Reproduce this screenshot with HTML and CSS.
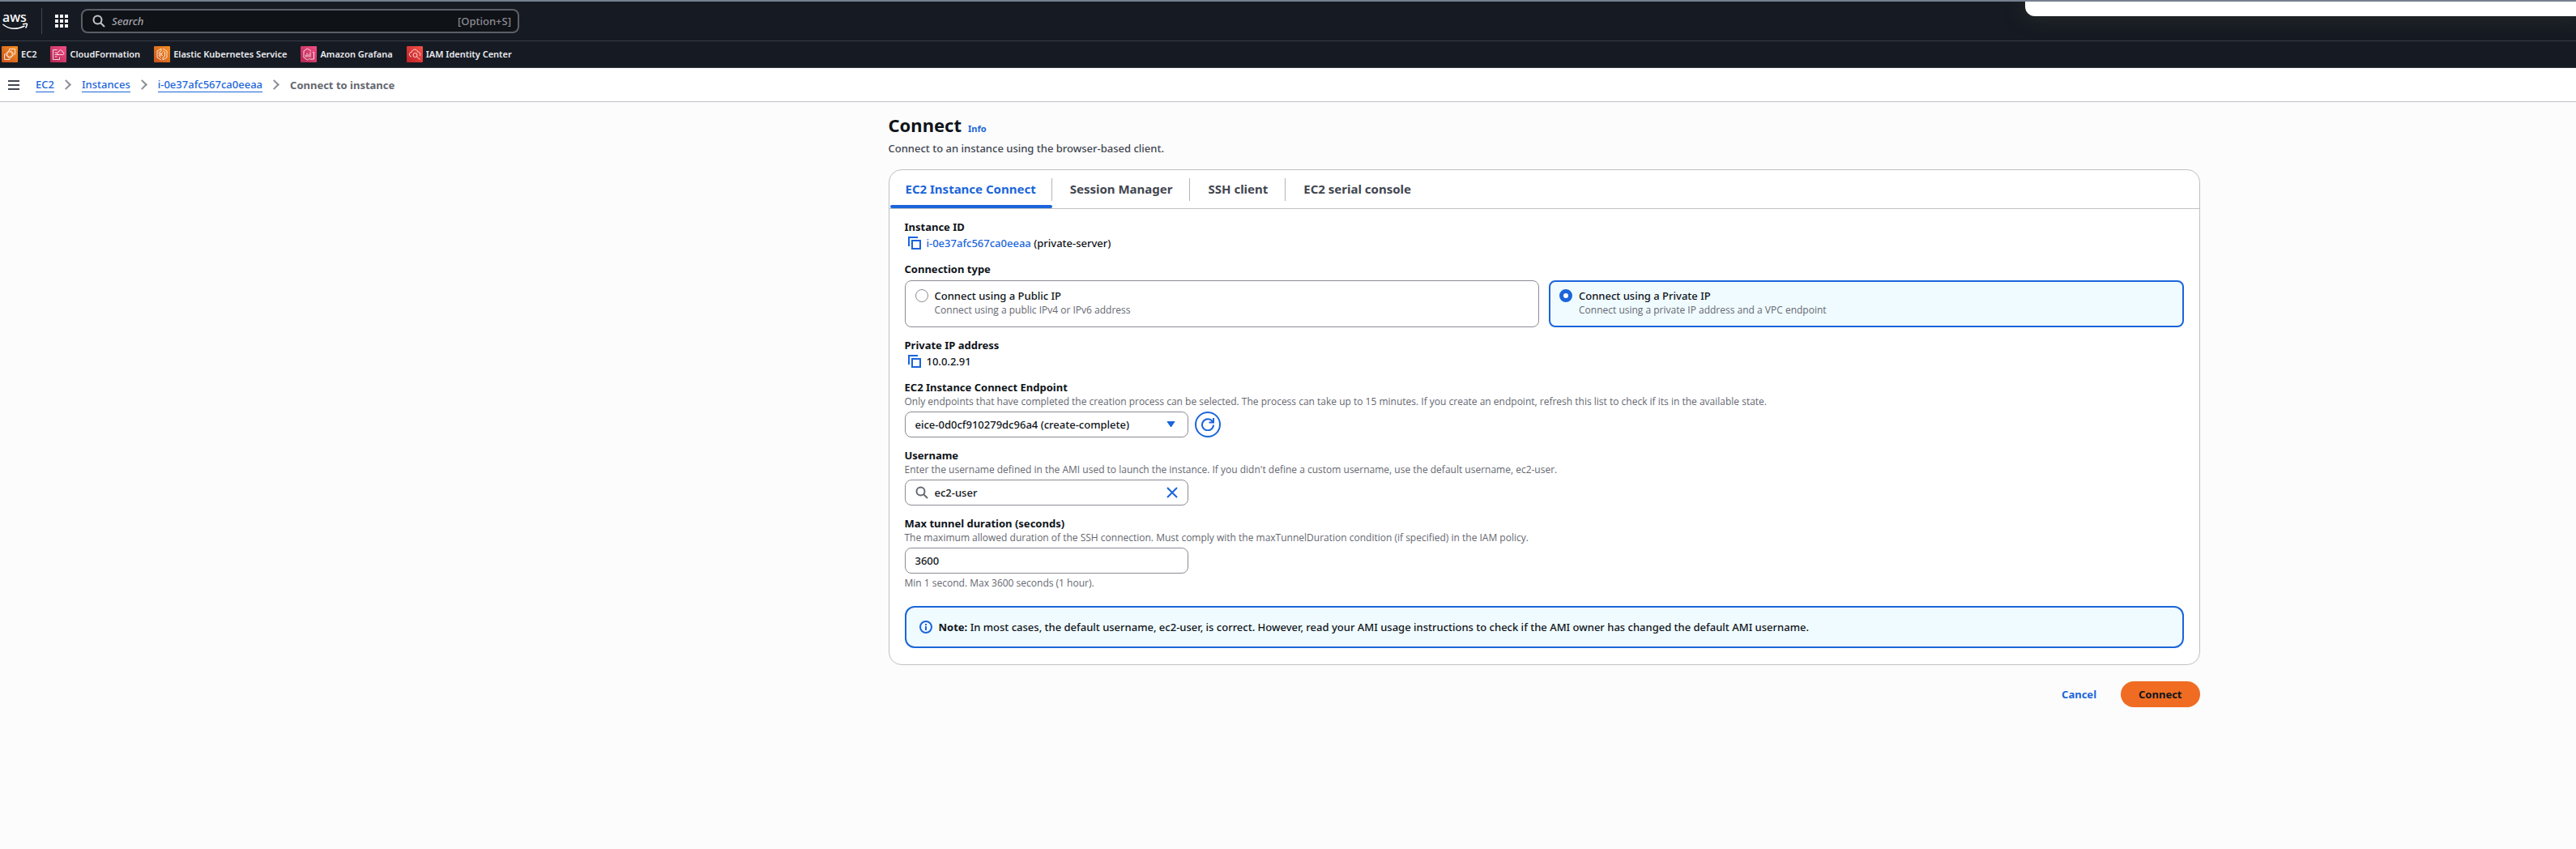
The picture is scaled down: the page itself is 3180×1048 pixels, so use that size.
FILE: index.html
```html
<!DOCTYPE html>
<html lang="en">

<head>
  <meta charset="UTF-8">
  <meta name="viewport" content="width=device-width, initial-scale=1.0">
  <title>Connect to instance | EC2</title>
  <link rel="stylesheet" href="styles.css">
</head>

<body>
  <header class="console-header">
    <div class="top-bar">
      <a class="aws-logo" href="#" aria-label="AWS home">
        <svg width="32" height="32" viewBox="0 0 32 32">
          <text x="0" y="17" font-size="16" fill="#fff">aws</text>
          <path d="M0.500 20c8 6.500 18 6.500 27 2M25 20c3-1 6-1 5.500 0s-.5 3-2 4.500" fill="none" stroke="#fff" stroke-width="1.500" />
        </svg>
      </a>
      <span class="divider"></span>
      <button class="icon-button services" aria-label="Services">
        <svg width="16" height="16" viewBox="0 0 16 16" fill="#fff">
          <path d="M0 0h4v4H0zM6 0h4v4H6zM12 0h4v4h-4zM0 6h4v4H0zM6 6h4v4H6zM12 6h4v4h-4zM0 12h4v4H0zM6 12h4v4H6zM12 12h4v4h-4z" />
        </svg>
      </button>
      <div class="global-search">
        <svg width="16" height="16" viewBox="0 0 16 16" fill="none" stroke="#c6c6cd" stroke-width="2">
          <circle cx="6.500" cy="6.500" r="5" />
          <path d="M10 10l5 5" />
        </svg>
        <input type="search" placeholder="Search" aria-label="Search">
        <span class="shortcut">[Option+S]</span>
      </div>
    </div>

    <nav class="favorites" aria-label="Favorites">
      <a href="#">
        <svg width="20" height="20" viewBox="0 0 20 20">
          <defs>
            <linearGradient id="orange" x1="0" y1="1" x2="1" y2="0">
              <stop stop-color="#c8511b" />
              <stop offset="1" stop-color="#f79022" />
            </linearGradient>
            <linearGradient id="pink" x1="0" y1="1" x2="1" y2="0">
              <stop stop-color="#b0264f" />
              <stop offset="1" stop-color="#f34f86" />
            </linearGradient>
            <linearGradient id="red" x1="0" y1="1" x2="1" y2="0">
              <stop stop-color="#bd1f27" />
              <stop offset="1" stop-color="#f85348" />
            </linearGradient>
          </defs>
          <rect width="20" height="20" rx="1" fill="url(#orange)" />
          <path d="M9.500 6V3.500h7V10h-2.500M6 10H3.500v6.500H10V14M7 7h6v6H7zM8.500 7V5.500M11.500 7V5.500M8.500 13v1.500M11.500 13v1.500M7 8.500H5.500M7 11.500H5.500M13 8.500h1.500M13 11.500h1.500" fill="none" stroke="#fff" stroke-width=".8" />
        </svg>
        EC2
      </a>
      <a href="#">
        <svg width="20" height="20" viewBox="0 0 20 20">
          <rect width="20" height="20" rx="1" fill="url(#pink)" />
          <path d="M8.500 4.500h-5v12h8v-3M5.500 8h3M5.500 10.500h4M5.500 13h3M9 10.500c-1-3 1-3.500 1.500-3.500.5-3 4-3 4.500 0 2 0 2.500 3.500.5 3.500z" fill="none" stroke="#fff" stroke-width=".8" />
        </svg>
        CloudFormation
      </a>
      <a href="#">
        <svg width="20" height="20" viewBox="0 0 20 20">
          <rect width="20" height="20" rx="1" fill="url(#orange)" />
          <path d="M9 3L4 6v8l5 3M11 3l5 3v8l-5 3M9 6L6.500 7.500v5L9 14M11 6l2.500 1.500v5L11 14M9 3v3M11 14v3M8.500 8v4M8.500 10l2.500-2M8.500 10l2.500 2" fill="none" stroke="#fff" stroke-width=".8" />
        </svg>
        Elastic Kubernetes Service
      </a>
      <a href="#">
        <svg width="20" height="20" viewBox="0 0 20 20">
          <rect width="20" height="20" rx="1" fill="url(#pink)" />
          <path d="M13 6L8.500 3 4 6v8l4.500 3 2-1.500M11 16h5.500V7.500H15M8 8.500v5M10 10v3.500M12 7.500v6M6.500 11v2.500" fill="none" stroke="#fff" stroke-width=".8" />
        </svg>
        Amazon Grafana
      </a>
      <a href="#">
        <svg width="20" height="20" viewBox="0 0 20 20">
          <rect width="20" height="20" rx="1" fill="url(#red)" />
          <path d="M6 13c-4-1-3-5.500 0-5.500C7 3 13 3 13.500 7c3.500 0 4 4 2.500 5M12.500 13l4 3.500" fill="none" stroke="#fff" stroke-width=".8" />
          <circle cx="10.500" cy="11" r="2.500" fill="none" stroke="#fff" stroke-width=".8" />
        </svg>
        IAM Identity Center
      </a>
    </nav>
    <div class="notice-panel"></div>
  </header>

  <div class="breadcrumb-bar">
    <button class="icon-button" aria-label="Open navigation">
      <svg width="14" height="12" viewBox="0 0 14 12" stroke="#424650" stroke-width="2">
        <path d="M0 1h14M0 6h14M0 11h14" />
      </svg>
    </button>
    <nav aria-label="Breadcrumbs">
      <ol class="breadcrumbs">
        <li><a href="#">EC2</a></li>
        <li><a href="#">Instances</a></li>
        <li><a href="#">i-0e37afc567ca0eeaa</a></li>
        <li>Connect to instance</li>
      </ol>
    </nav>
  </div>

  <main class="page">
    <form class="content">
      <div class="page-header">
        <h1>Connect</h1>
        <a class="info-link" href="#">Info</a>
      </div>
      <p class="page-description">Connect to an instance using the browser-based client.</p>

      <section class="card">
        <div class="tabs" role="tablist">
          <button type="button" role="tab" class="tab active" aria-selected="true">EC2 Instance Connect</button>
          <button type="button" role="tab" class="tab">Session Manager</button>
          <button type="button" role="tab" class="tab">SSH client</button>
          <button type="button" role="tab" class="tab">EC2 serial console</button>
        </div>

        <div class="card-body">
          <div class="field">
            <h2 class="label">Instance ID</h2>
            <div class="copy-row">
              <button type="button" class="icon-button" aria-label="Copy instance ID">
                <svg width="16" height="16" viewBox="0 0 16 16" fill="none" stroke="#1b65da" stroke-width="2">
                  <path d="M5 5h10v10H5zM1 12V1h11" />
                </svg>
              </button>
              <span><a href="#">i-0e37afc567ca0eeaa</a> (private-server)</span>
            </div>
          </div>

          <fieldset class="field">
            <legend class="label">Connection type</legend>
            <div class="tiles">
              <label class="tile">
                <input type="radio" name="connection">
                <span class="tile-text">
                  <span>Connect using a Public IP</span>
                  <span class="hint">Connect using a public IPv4 or IPv6 address</span>
                </span>
              </label>
              <label class="tile selected">
                <input type="radio" name="connection" checked>
                <span class="tile-text">
                  <span>Connect using a Private IP</span>
                  <span class="hint">Connect using a private IP address and a VPC endpoint</span>
                </span>
              </label>
            </div>
          </fieldset>

          <div class="field">
            <h2 class="label">Private IP address</h2>
            <div class="copy-row">
              <button type="button" class="icon-button" aria-label="Copy private IP address">
                <svg width="16" height="16" viewBox="0 0 16 16" fill="none" stroke="#1b65da" stroke-width="2">
                  <path d="M5 5h10v10H5zM1 12V1h11" />
                </svg>
              </button>
              <span>10.0.2.91</span>
            </div>
          </div>

          <div class="field">
            <label class="label" for="endpoint">EC2 Instance Connect Endpoint</label>
            <p class="hint">Only endpoints that have completed the creation process can be selected. The process can take up to 15 minutes. If you create an endpoint, refresh this list to check if its in the available state.</p>
            <div class="control-row">
              <div class="control">
                <select id="endpoint">
                  <option>eice-0d0cf910279dc96a4 (create-complete)</option>
                </select>
                <svg width="16" height="8" viewBox="0 0 16 8">
                  <path d="M3 .5h9L7.500 7z" fill="#1b65da" stroke="#1b65da" stroke-linejoin="round" />
                </svg>
              </div>
              <button type="button" class="refresh-button" aria-label="Refresh endpoints">
                <svg width="16" height="16" viewBox="0 0 16 16" fill="none" stroke="#1b65da" stroke-width="2">
                  <path d="M15 8.500A7 7 0 1 1 13.500 4L15 5.500M15 0v5.500H9.500" />
                </svg>
              </button>
            </div>
          </div>

          <div class="field">
            <label class="label" for="username">Username</label>
            <p class="hint">Enter the username defined in the AMI used to launch the instance. If you didn't define a custom username, use the default username, ec2-user.</p>
            <div class="control">
              <svg width="16" height="16" viewBox="0 0 16 16" fill="none" stroke="#656871" stroke-width="2">
                <circle cx="6.500" cy="6.500" r="5" />
                <path d="M10 10l5 5" />
              </svg>
              <input id="username" type="text" value="ec2-user">
              <button type="button" class="icon-button" aria-label="Clear username">
                <svg width="14" height="14" viewBox="0 0 14 14" stroke="#1b65da" stroke-width="2">
                  <path d="M1 1l12 12M13 1L1 13" />
                </svg>
              </button>
            </div>
          </div>

          <div class="field">
            <label class="label" for="duration">Max tunnel duration (seconds)</label>
            <p class="hint">The maximum allowed duration of the SSH connection. Must comply with the maxTunnelDuration condition (if specified) in the IAM policy.</p>
            <div class="control">
              <input id="duration" type="text" value="3600">
            </div>
            <p class="hint constraint">Min 1 second. Max 3600 seconds (1 hour).</p>
          </div>

          <div class="alert">
            <svg width="16" height="16" viewBox="0 0 16 16" fill="none" stroke="#1b65da" stroke-width="2">
              <circle cx="8" cy="8" r="7" />
              <path d="M8 7v5M8 4v2" />
            </svg>
            <p><b>Note:</b> In most cases, the default username, ec2-user, is correct. However, read your AMI usage instructions to check if the AMI owner has changed the default AMI username.</p>
          </div>
        </div>
      </section>

      <div class="actions">
        <button type="button" class="button link">Cancel</button>
        <button type="submit" class="button primary">Connect</button>
      </div>
    </form>
  </main>
</body>

</html>
```

FILE: styles.css
```css
*,
*::before,
*::after {
  box-sizing: border-box;
}

body {
  margin: 0;
  min-height: 100vh;
  background: #fcfcfd;
  color: #0f141a;
  font-family: "Noto Sans", "Open Sans", sans-serif;
  font-size: 13px;
  font-weight: 500;
  line-height: 20px;
}

h1,
h2,
p,
ol {
  margin: 0;
  padding: 0;
}

svg {
  display: block;
  flex: none;
}

a {
  color: #1b65da;
  text-decoration: none;
}

button,
input,
select {
  font: inherit;
  color: inherit;
}

.icon-button {
  background: none;
  border: 0;
  padding: 0;
  cursor: pointer;
}

/* Console header */
.console-header {
  position: relative;
  background: #161b23;
  border-top: 2px solid #75808f;
  border-bottom: 1px solid #393e46;
  overflow: hidden;
}

.top-bar {
  display: flex;
  align-items: center;
  height: 49px;
  padding-left: 3px;
  border-bottom: 1px solid #393e46;
}

.divider {
  width: 1px;
  height: 32px;
  margin: 0 16px;
  background: #424650;
}

.global-search {
  display: flex;
  align-items: center;
  gap: 8px;
  width: 541px;
  height: 30px;
  margin-left: 16px;
  padding: 0 8px 0 12px;
  background: #0f1216;
  border: 2px solid #5c5f68;
  border-radius: 8px;
  color: #8c8c94;

  input {
    flex: 1;
    min-width: 0;
    padding: 0;
    background: none;
    border: 0;

    &::placeholder {
      color: #a4a4ad;
      font-style: italic;
    }
  }
}

.favorites {
  display: flex;
  gap: 17px;
  height: 32px;
  padding-left: 2px;
  font-size: 11px;
  font-weight: 600;

  a {
    display: flex;
    align-items: center;
    gap: 4px;
    color: #ebebf0;
  }
}

.notice-panel {
  position: absolute;
  top: -12px;
  right: -12px;
  width: 692px;
  height: 30px;
  background: #fff;
  border-radius: 12px;
  box-shadow: 0 0 24px rgba(60, 66, 50, .5);
}

.breadcrumb-bar {
  display: flex;
  align-items: center;
  gap: 20px;
  height: 42px;
  padding-left: 10px;
  background: #fff;
  border-bottom: 1px solid #c0c0c6;
}

.breadcrumbs {
  display: flex;
  list-style: none;
  color: #656871;
  font-weight: 700;

  li {
    display: flex;
    align-items: center;
  }

  li + li::before {
    content: "";
    width: 9px;
    height: 9px;
    margin: 0 15px 0 10px;
    border: solid #8c8c94;
    border-width: 2px 2px 0 0;
    rotate: 45deg;
  }

  a {
    border-bottom: 1px solid #1b65da;
    line-height: 18px;
    font-weight: 500;
  }
}

/* Page */
.page {
  padding: 14px 0 32px 632px;
}

.content {
  max-width: 1619px;
  margin: 0 auto;
}

.page-header {
  display: flex;
  align-items: baseline;
  gap: 8px;

  h1 {
    font-size: 22px;
    line-height: 28px;
  }
}

.info-link {
  font-size: 11px;
  font-weight: 700;
}

.page-description {
  margin: 4px 0 16px;
  color: #424650;
}

.card {
  background: #fff;
  border: 1px solid #c0c0c6;
  border-radius: 16px;
}

.tabs {
  display: flex;
  height: 48px;
  padding-left: 1px;
  border-bottom: 1px solid #c0c0c6;
}

.tab {
  position: relative;
  padding: 0 22px 2px;
  background: none;
  border: 0;
  color: #424650;
  font-size: 15px;
  font-weight: 700;
  cursor: pointer;

  &:first-child {
    padding: 0 20px 2px 19px;
  }

  &:not(:last-child)::after {
    content: "";
    position: absolute;
    top: 10px;
    right: 0;
    width: 1px;
    height: 28px;
    background: #b4b4bb;
  }

  &.active {
    color: #1b65da;
  }

  &.active::before {
    content: "";
    position: absolute;
    inset: auto 0 0 0;
    height: 4px;
    background: #1b65da;
    border-radius: 2px;
  }
}

.card-body {
  display: flex;
  flex-direction: column;
  gap: 12px;
  padding: 12px 19px 20px;
}

.field {
  min-width: 0;
  margin: 0;
  padding: 0;
  border: 0;
}

.label {
  display: block;
  padding: 0;
  font-size: 13px;
  line-height: 20px;
  font-weight: 700;
}

.hint {
  color: #656871;
  font-family: "Open Sans", "Noto Sans", sans-serif;
  font-size: 12px;
  font-weight: 400;
  line-height: 16px;
}

.copy-row {
  display: flex;
  align-items: center;
  gap: 7px;
  padding-left: 4px;
}

.tiles {
  display: grid;
  grid-template-columns: 1fr 1fr;
  gap: 12px;
  margin-top: 4px;
}

.tile {
  display: flex;
  gap: 8px;
  min-height: 58px;
  padding: 8px 12px;
  border: 1px solid #8c8c94;
  border-radius: 8px;

  &.selected {
    padding: 7px 11px;
    background: #f0fbff;
    border: 2px solid #1b65da;
  }

  input {
    appearance: none;
    width: 16px;
    height: 16px;
    margin: 2px 0;
    background: #fff;
    border: 1px solid #8c8c94;
    border-radius: 50%;
  }

  input:checked {
    border: 5px solid #1b65da;
  }
}

.tile-text {
  display: flex;
  flex-direction: column;
}

.control-row {
  display: flex;
  align-items: center;
  gap: 8px;
}

.control {
  display: flex;
  align-items: center;
  gap: 8px;
  width: 350px;
  height: 32px;
  margin-top: 4px;
  padding: 0 12px;
  background: #fff;
  border: 1px solid #8c8c94;
  border-radius: 8px;

  input,
  select {
    appearance: none;
    flex: 1;
    min-width: 0;
    padding: 0;
    background: none;
    border: 0;
  }
}

.refresh-button {
  display: grid;
  place-content: center;
  width: 32px;
  height: 32px;
  margin-top: 4px;
  padding: 0;
  background: #fff;
  border: 2px solid #1b65da;
  border-radius: 50%;
  cursor: pointer;
}

.constraint {
  margin-top: 4px;
}

.alert {
  display: flex;
  align-items: center;
  gap: 8px;
  margin-top: 8px;
  padding: 14px 16px;
  background: #f0fbff;
  border: 2px solid #1b65da;
  border-radius: 12px;
}

.actions {
  display: flex;
  justify-content: flex-end;
  gap: 8px;
  margin-top: 20px;
}

.button {
  height: 32px;
  padding: 0 22px;
  background: none;
  border: 0;
  border-radius: 16px;
  font-weight: 700;
  cursor: pointer;

  &.link {
    color: #1b65da;
  }

  &.primary {
    background: #f06c22;
  }
}
```
